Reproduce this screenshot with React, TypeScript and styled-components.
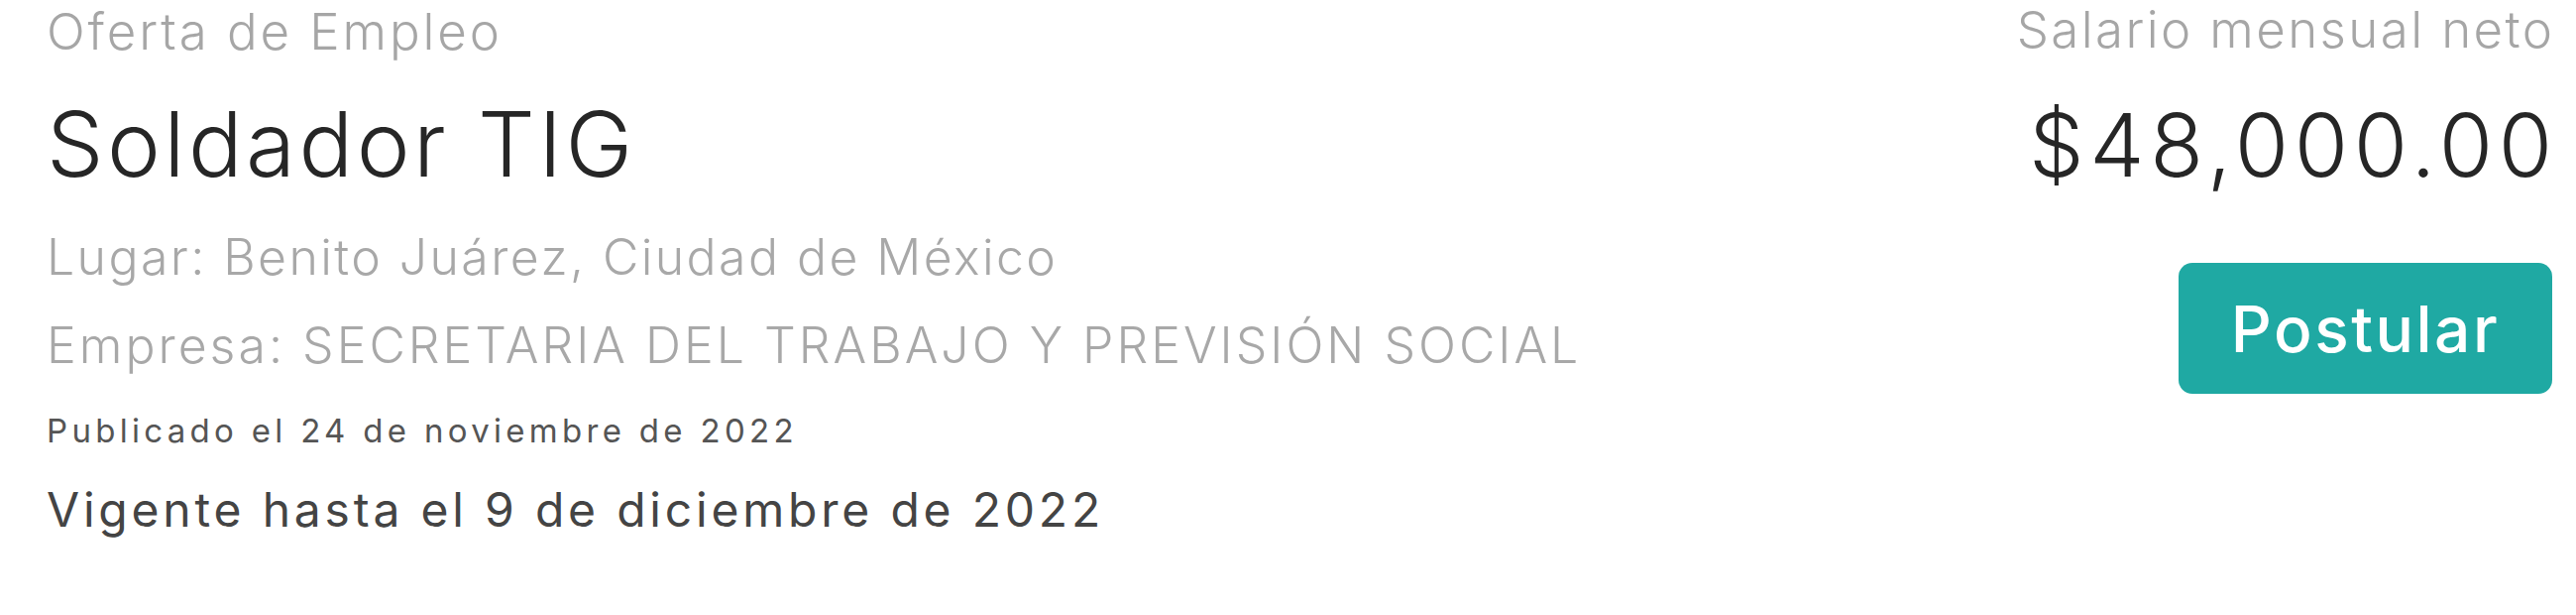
import React from "react";
import styled, { createGlobalStyle } from "styled-components";

const GlobalStyle = createGlobalStyle`
  html, body {
    margin: 0;
    padding: 0;
    background: #ffffff;
  }
  body {
    font-family: Inter, "Open Sans", "Liberation Sans", sans-serif;
  }
`;

const Card = styled.div`
  display: flex;
  justify-content: space-between;
  align-items: flex-start;
  padding: 0 24px 0 47px;
  height: 620px;
  box-sizing: border-box;
`;

const Column = styled.div<{ $align?: "left" | "right" }>`
  display: flex;
  flex-direction: column;
  align-items: ${(p) => (p.$align === "right" ? "flex-end" : "flex-start")};
  text-align: ${(p) => p.$align ?? "left"};
`;

type LineProps = {
  $size: number;
  $lh: number;
  $mt?: number;
  $color: string;
  $weight?: number;
  $ls?: number;
  $trim?: boolean;
};

// letter-spacing widens Inter towards the look of the original geometric face
const Line = styled.div<LineProps>`
  font-size: ${(p) => p.$size}px;
  line-height: ${(p) => p.$lh}px;
  margin-top: ${(p) => p.$mt ?? 0}px;
  margin-right: ${(p) => (p.$trim ? -(p.$ls ?? 0) : 0)}px;
  color: ${(p) => p.$color};
  font-weight: ${(p) => p.$weight ?? 300};
  letter-spacing: ${(p) => p.$ls ?? 0}px;
  white-space: nowrap;
`;

const ApplyButton = styled.button`
  margin-top: 64px;
  width: 377px;
  height: 132px;
  padding: 0;
  border: none;
  border-radius: 14px;
  background: #1fa9a3;
  color: #ffffff;
  font-family: Inter, "Open Sans", sans-serif;
  font-size: 64px;
  font-weight: 500;
  letter-spacing: 2.5px;
  cursor: pointer;
`;

const App = () => {
  return (
    <>
      <GlobalStyle />
      <Card>
        <Column>
          <Line $size={51} $lh={63} $ls={2.9} $color="#a6a6a6">
            Oferta de Empleo
          </Line>
          <Line $size={91} $lh={118} $mt={23} $ls={3.4} $color="#262626">
            Soldador TIG
          </Line>
          <Line $size={50} $lh={65} $mt={23} $ls={2.4} $color="#a8a8a8">
            Lugar: Benito Juárez, Ciudad de México
          </Line>
          <Line $size={50} $lh={65} $mt={24} $ls={3} $color="#a8a8a8">
            Empresa: SECRETARIA DEL TRABAJO Y PREVISIÓN SOCIAL
          </Line>
          <Line $size={33} $lh={40} $mt={33} $ls={4.3} $color="#555555" $weight={400}>
            Publicado el 24 de noviembre de 2022
          </Line>
          <Line $size={48} $lh={62} $mt={29} $ls={3.8} $color="#444444" $weight={400}>
            Vigente hasta el 9 de diciembre de 2022
          </Line>
        </Column>
        <Column $align="right">
          <Line $size={51} $lh={59} $ls={2.4} $trim $color="#a6a6a6">
            Salario mensual neto
          </Line>
          <Line $size={88} $lh={110} $mt={32} $ls={5.6} $trim $color="#262626">
            $48,000.00
          </Line>
          <ApplyButton>Postular</ApplyButton>
        </Column>
      </Card>
    </>
  );
};

export default App;
